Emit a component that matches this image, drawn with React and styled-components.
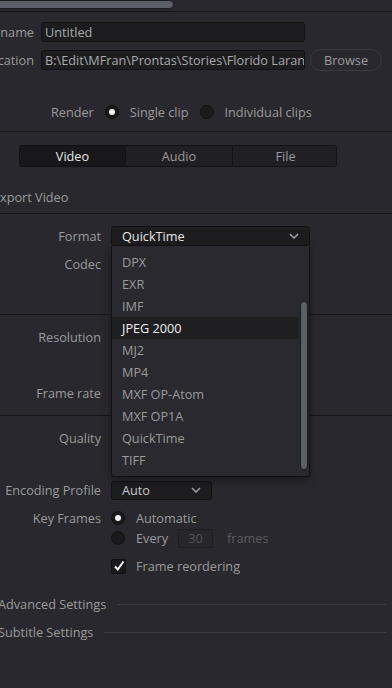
import React from 'react';
import styled, { createGlobalStyle } from 'styled-components';

const GlobalStyle = createGlobalStyle`
  html, body { margin: 0; padding: 0; background: #28282e; }
  body {
    font-family: "Open Sans", "Noto Sans", sans-serif;
    font-size: 12.7px;
    color: #9b9b9b;
    overflow: hidden;
  }
  * { box-sizing: border-box; }
`;

const Panel = styled.div`
  width: 392px;
  height: 688px;
  overflow: hidden;
  background: #28282e;
  display: flex;
  flex-direction: column;
`;

const TopBar = styled.div`
  height: 12px;
  border-bottom: 1px solid #161619;
`;

const HThumb = styled.div`
  width: 178px;
  height: 9px;
  margin-left: -4px;
  background: #5b6068;
  border: 1px solid #1b1b1e;
  border-radius: 0 5px 5px 0;
`;

const Section = styled.section`
  display: flex;
  flex-direction: column;
  padding: ${(p) => p.$pad || '0'};
  border-bottom: ${(p) => (p.$line ? '1px solid #161619' : 'none')};
`;

const FileRow = styled.div`
  display: grid;
  grid-template-columns: 34px 264px auto;
  column-gap: 7px;
  align-items: center;
  height: ${(p) => p.$h || 20}px;
  margin-top: ${(p) => p.$mt || 0}px;
`;

const Label = styled.div`
  display: flex;
  justify-content: flex-end;
  overflow: hidden;
  white-space: nowrap;
  color: #9b9b9b;
  line-height: 20px;
`;

const TextInput = styled.div`
  height: 20px;
  background: #1d1d20;
  border: 1px solid #121214;
  border-radius: 3px;
  padding: 0 3px;
  line-height: 18px;
  color: #a9a9a9;
  white-space: nowrap;
  overflow: hidden;
`;

const PillButton = styled.div`
  width: 72px;
  height: 22px;
  margin-left: -2px;
  border: 1px solid #3b3b42;
  border-radius: 11px;
  display: flex;
  align-items: center;
  justify-content: center;
  color: #9b9b9b;
`;

const RenderRow = styled.div`
  display: flex;
  align-items: center;
  height: 20px;
  margin-top: 32px;
  padding-left: 51px;
  gap: 11px;
  white-space: nowrap;
`;

const Radio = styled.span`
  width: 14px;
  height: 14px;
  border-radius: 50%;
  background: #1a1a1d;
  border: 1px solid #111113;
  display: inline-flex;
  align-items: center;
  justify-content: center;
  flex: none;
  &::after {
    content: '';
    width: 6px;
    height: 6px;
    border-radius: 50%;
    background: #f2f2f2;
    display: ${(p) => (p.$on ? 'block' : 'none')};
  }
`;

const Tabs = styled.div`
  display: grid;
  grid-template-columns: 105px 107px 106px;
  width: 318px;
  height: 22px;
  margin: 13px 0 0 19px;
  border: 1px solid #121214;
  border-radius: 3px;
  overflow: hidden;
`;

const Tab = styled.div`
  display: flex;
  align-items: center;
  justify-content: center;
  background: ${(p) => (p.$active ? '#18181b' : '#202024')};
  color: ${(p) => (p.$active ? '#e8e8e8' : '#9b9b9b')};
  border-left: ${(p) => (p.$first ? 'none' : '1px solid #121214')};
`;

const SectionTitle = styled.div`
  height: 20px;
  line-height: 20px;
  margin: ${(p) => p.$m || '0'};
  color: #9b9b9b;
  white-space: nowrap;
`;

const FieldRow = styled.div`
  display: grid;
  grid-template-columns: 101px 1fr;
  column-gap: 10px;
  align-items: center;
  min-height: 20px;
  margin-top: ${(p) => p.$mt || 0}px;
`;

const Control = styled.div`
  position: relative;
  display: flex;
  align-items: center;
  gap: ${(p) => p.$gap || 0}px;
  white-space: nowrap;
`;

const Select = styled.div`
  width: ${(p) => p.$w}px;
  height: ${(p) => p.$h || 20}px;
  background: #1d1d20;
  border: 1px solid #121214;
  border-radius: 3px;
  display: flex;
  align-items: center;
  justify-content: space-between;
  padding: 0 10px 0 10px;
  color: ${(p) => p.$color || '#e6e6e6'};
`;

const Menu = styled.div`
  position: absolute;
  top: 20px;
  left: 0;
  width: 199px;
  height: 231px;
  background: #29292f;
  border: 1px solid #121214;
  border-top: none;
  border-radius: 0 0 3px 3px;
  box-shadow: 0 3px 8px rgba(0, 0, 0, 0.4);
  padding: 5px 10px 0 0;
  z-index: 10;
`;

const MenuItem = styled.div`
  height: 22px;
  line-height: 22px;
  padding-left: 10px;
  background: ${(p) => (p.$active ? '#1f1f22' : 'transparent')};
  color: ${(p) => (p.$active ? '#f0f0f0' : '#9b9b9b')};
`;

const MenuScroll = styled.div`
  position: absolute;
  right: 1px;
  top: 55px;
  width: 8px;
  height: 169px;
  background: #5b6068;
  border: 1px solid #1b1b1e;
  border-radius: 4px;
`;

const SmallInput = styled.div`
  width: 35px;
  height: 19px;
  border: 1px solid #1e1e22;
  background: #26262b;
  border-radius: 2px;
  color: #555559;
  display: flex;
  align-items: center;
  justify-content: center;
`;

const Dim = styled.span`
  color: #5c5c61;
  margin-left: 4px;
`;

const CheckBox = styled.span`
  width: 15px;
  height: 15px;
  background: #1a1a1d;
  border: 1px solid #111113;
  border-radius: 2px;
  display: inline-flex;
  align-items: center;
  justify-content: center;
  flex: none;
`;

const Collapsed = styled.div`
  display: flex;
  align-items: center;
  height: 28px;
  margin-left: -2px;
  margin-right: 6px;
  gap: 11px;
  color: #9b9b9b;
  white-space: nowrap;
  &::after {
    content: '';
    flex: 1;
    height: 1px;
    background: #3c3c42;
  }
`;

const Chevron = () => (
  <svg width="10" height="6" viewBox="0 0 10 6">
    <path d="M1 1 L5 5 L9 1" fill="none" stroke="#a0a0a0" strokeWidth="1.5" />
  </svg>
);

const Check = () => (
  <svg width="12" height="12" viewBox="0 0 12 12">
    <path d="M2 6.5 L4.8 9.5 L10.5 1.5" fill="none" stroke="#f4f4f4" strokeWidth="2" />
  </svg>
);

const formats = ['DPX', 'EXR', 'IMF', 'JPEG 2000', 'MJ2', 'MP4', 'MXF OP-Atom', 'MXF OP1A', 'QuickTime', 'TIFF'];

export default function App() {
  return (
    <Panel>
      <GlobalStyle />
      <TopBar>
        <HThumb />
      </TopBar>

      <Section $pad="10px 0 9px" $line>
        <FileRow>
          <Label>File name</Label>
          <TextInput>Untitled</TextInput>
        </FileRow>
        <FileRow $mt={7} $h={21}>
          <Label>Location</Label>
          <TextInput>B:\Edit\MFran\Prontas\Stories\Florido Laranja</TextInput>
          <PillButton>Browse</PillButton>
        </FileRow>
        <RenderRow>
          <span>Render</span>
          <Radio $on />
          <span>Single clip</span>
          <Radio />
          <span>Individual clips</span>
        </RenderRow>
      </Section>

      <Section $pad="0 0 6px" $line>
        <Tabs>
          <Tab $active $first>Video</Tab>
          <Tab>Audio</Tab>
          <Tab>File</Tab>
        </Tabs>
        <SectionTitle $m="20px 0 0 -7px">Export Video</SectionTitle>
      </Section>

      <Section $pad="12px 0 40px" $line style={{ position: 'relative', zIndex: 5 }}>
        <FieldRow>
          <Label>Format</Label>
          <Control>
            <Select $w={199}>
              <span>QuickTime</span>
              <Chevron />
            </Select>
            <Menu>
              {formats.map((f) => (
                <MenuItem key={f} $active={f === 'JPEG 2000'}>{f}</MenuItem>
              ))}
              <MenuScroll />
            </Menu>
          </Control>
        </FieldRow>
        <FieldRow $mt={8}>
          <Label>Codec</Label>
          <Control />
        </FieldRow>
      </Section>

      <Section $pad="12px 0 12px" $line>
        <FieldRow>
          <Label>Resolution</Label>
          <Control />
        </FieldRow>
        <FieldRow $mt={36}>
          <Label>Frame rate</Label>
          <Control />
        </FieldRow>
      </Section>

      <Section $pad="12px 0 0">
        <FieldRow>
          <Label>Quality</Label>
          <Control />
        </FieldRow>
        <FieldRow $mt={32}>
          <Label>Encoding Profile</Label>
          <Control>
            <Select $w={101} $h={19} $color="#c8c8c8">
              <span>Auto</span>
              <Chevron />
            </Select>
          </Control>
        </FieldRow>
        <FieldRow $mt={8}>
          <Label>Key Frames</Label>
          <Control $gap={11}>
            <Radio $on />
            <span>Automatic</span>
          </Control>
        </FieldRow>
        <FieldRow>
          <span />
          <Control $gap={10}>
            <Radio />
            <span style={{ marginLeft: 1 }}>Every</span>
            <SmallInput>30</SmallInput>
            <Dim>frames</Dim>
          </Control>
        </FieldRow>
        <FieldRow $mt={8}>
          <span />
          <Control $gap={10}>
            <CheckBox>
              <Check />
            </CheckBox>
            <span>Frame reordering</span>
          </Control>
        </FieldRow>
        <div style={{ height: 14 }} />
        <Collapsed>Advanced Settings</Collapsed>
        <Collapsed>Subtitle Settings</Collapsed>
      </Section>
    </Panel>
  );
}
